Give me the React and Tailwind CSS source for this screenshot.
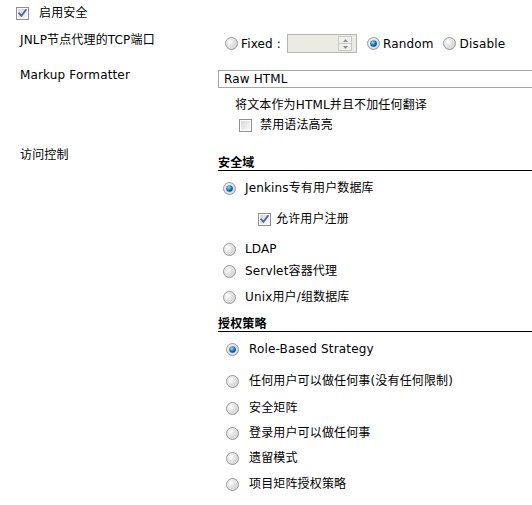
import React from "react";

const FONT = {
  fontFamily: '"DejaVu Sans", Verdana, "Noto Sans CJK SC", sans-serif',
};

function Radio({ checked }) {
  return (
    <svg width="13" height="13" viewBox="0 0 13 13" className="shrink-0">
      <defs>
        <radialGradient id="rg-off" cx="35%" cy="35%" r="70%">
          <stop offset="0%" stopColor="#ffffff" />
          <stop offset="100%" stopColor="#c8c8c8" />
        </radialGradient>
        <radialGradient id="rg-on" cx="40%" cy="35%" r="65%">
          <stop offset="0%" stopColor="#9fe0ff" />
          <stop offset="55%" stopColor="#1d83c9" />
          <stop offset="100%" stopColor="#0b3f72" />
        </radialGradient>
      </defs>
      <circle cx="6.5" cy="6.5" r="6" fill="url(#rg-off)" stroke="#9a9a9a" strokeWidth="1" />
      <circle cx="6.5" cy="6.5" r="4.6" fill="none" stroke="#e8e8e8" strokeWidth="0.8" />
      {checked && <circle cx="6.5" cy="6.5" r="3.3" fill="url(#rg-on)" />}
    </svg>
  );
}

function Checkbox({ checked }) {
  return (
    <svg width="13" height="13" viewBox="0 0 13 13" className="shrink-0">
      <defs>
        <linearGradient id="cb-fill" x1="0" y1="0" x2="1" y2="1">
          <stop offset="0%" stopColor="#d8d8d8" />
          <stop offset="100%" stopColor="#f8f8f8" />
        </linearGradient>
      </defs>
      <rect x="0.5" y="0.5" width="12" height="12" fill="#fff" stroke="#8e8f8f" />
      <rect x="2" y="2" width="9" height="9" fill="url(#cb-fill)" />
      {checked && (
        <path
          d="M3.2 6.4 L5.4 8.9 L9.9 2.9"
          fill="none"
          stroke="#4b63a8"
          strokeWidth="1.8"
          strokeLinecap="square"
        />
      )}
    </svg>
  );
}

function RadioRow({ checked, label, gap, mt }) {
  return (
    <div className={`flex items-center h-4 ${mt}`}>
      <Radio checked={checked} />
      <span className={`${gap} leading-[14px]`}>{label}</span>
    </div>
  );
}

function SectionHead({ children, mt }) {
  return (
    <div className={`font-bold leading-[14px] border-b border-black ${mt}`}>
      {children}
    </div>
  );
}

export default function App() {
  return (
    <div
      className="w-[532px] h-[505px] overflow-hidden bg-white text-black text-[12px] tracking-[0.15px]"
      style={FONT}
    >
      {/* 启用安全 */}
      <div className="flex items-center h-[26px] pl-4">
        <Checkbox checked />
        <span className="ml-[10px] leading-[14px]">启用安全</span>
      </div>

      {/* JNLP */}
      <div className="flex h-[32px]">
        <div className="w-[218px] shrink-0 pl-5 pt-[7px] leading-[14px]">JNLP节点代理的TCP端口</div>
        <div className="flex items-center mt-[8px] h-[19px] pl-[7px]">
          <Radio />
          <span className="ml-[3px]">Fixed :</span>
          <div className="ml-[6px] w-[70px] h-[19px] border border-[#b5b5b5] bg-[#ebebe4] flex justify-end items-center pr-[4px]">
            <div className="w-[14px] h-[15px] flex flex-col border border-[#c8c8c8] bg-[#f0f0f0]">
              <div className="flex-1 flex items-center justify-center border-b border-[#c8c8c8]">
                <svg width="5" height="3" viewBox="0 0 5 3">
                  <path d="M0 3 L2.5 0 L5 3 Z" fill="#8a8a8a" />
                </svg>
              </div>
              <div className="flex-1 flex items-center justify-center">
                <svg width="5" height="3" viewBox="0 0 5 3">
                  <path d="M0 0 L2.5 3 L5 0 Z" fill="#8a8a8a" />
                </svg>
              </div>
            </div>
          </div>
          <div className="ml-[10px] flex items-center">
            <Radio checked />
            <span className="ml-[3px]">Random</span>
          </div>
          <div className="ml-[9px] flex items-center">
            <Radio />
            <span className="ml-[4px]">Disable</span>
          </div>
        </div>
      </div>

      {/* Markup Formatter */}
      <div className="flex h-[34px]">
        <div className="w-[218px] shrink-0 pl-5 pt-[10px] leading-[14px]">Markup Formatter</div>
        <div className="mt-[12px] h-[18px] w-[330px] shrink-0 border border-[#a5a5a5] bg-white pl-[5px] flex items-center leading-[14px]">
          Raw HTML
        </div>
      </div>

      {/* description */}
      <div className="pl-[235px] mt-[6px] leading-[14px]">将文本作为HTML并且不加任何翻译</div>
      <div className="pl-[239px] mt-[5px] flex items-center h-4">
        <Checkbox />
        <span className="ml-[8px] leading-[14px]">禁用语法高亮</span>
      </div>

      {/* 访问控制 */}
      <div className="flex">
        <div className="w-[218px] shrink-0 pl-5 pt-[15px] leading-[14px]">访问控制</div>
        <div className="flex-1 pt-[23px]">
          <SectionHead>安全域</SectionHead>
          <div className="pl-[5px]">
            <RadioRow checked label="Jenkins专有用户数据库" gap="ml-[9px]" mt="mt-[9px]" />
            <div className="flex items-center h-4 mt-[15px] pl-[35px]">
              <Checkbox checked />
              <span className="ml-[5px] leading-[14px]">允许用户注册</span>
            </div>
            <RadioRow label="LDAP" gap="ml-[9px]" mt="mt-[14px]" />
            <RadioRow label="Servlet容器代理" gap="ml-[9px]" mt="mt-[6px]" />
            <RadioRow label="Unix用户/组数据库" gap="ml-[9px]" mt="mt-[10px]" />
          </div>
          <SectionHead mt="mt-[12px]">授权策略</SectionHead>
          <div className="pl-[8px]">
            <RadioRow checked label="Role-Based Strategy" gap="ml-[10px]" mt="mt-[9px]" />
            <RadioRow label="任何用户可以做任何事(没有任何限制)" gap="ml-[10px]" mt="mt-[16px]" />
            <RadioRow label="安全矩阵" gap="ml-[10px]" mt="mt-[11px]" />
            <RadioRow label="登录用户可以做任何事" gap="ml-[10px]" mt="mt-[9px]" />
            <RadioRow label="遗留模式" gap="ml-[10px]" mt="mt-[9px]" />
            <RadioRow label="项目矩阵授权策略" gap="ml-[10px]" mt="mt-[10px]" />
          </div>
        </div>
      </div>
    </div>
  );
}
